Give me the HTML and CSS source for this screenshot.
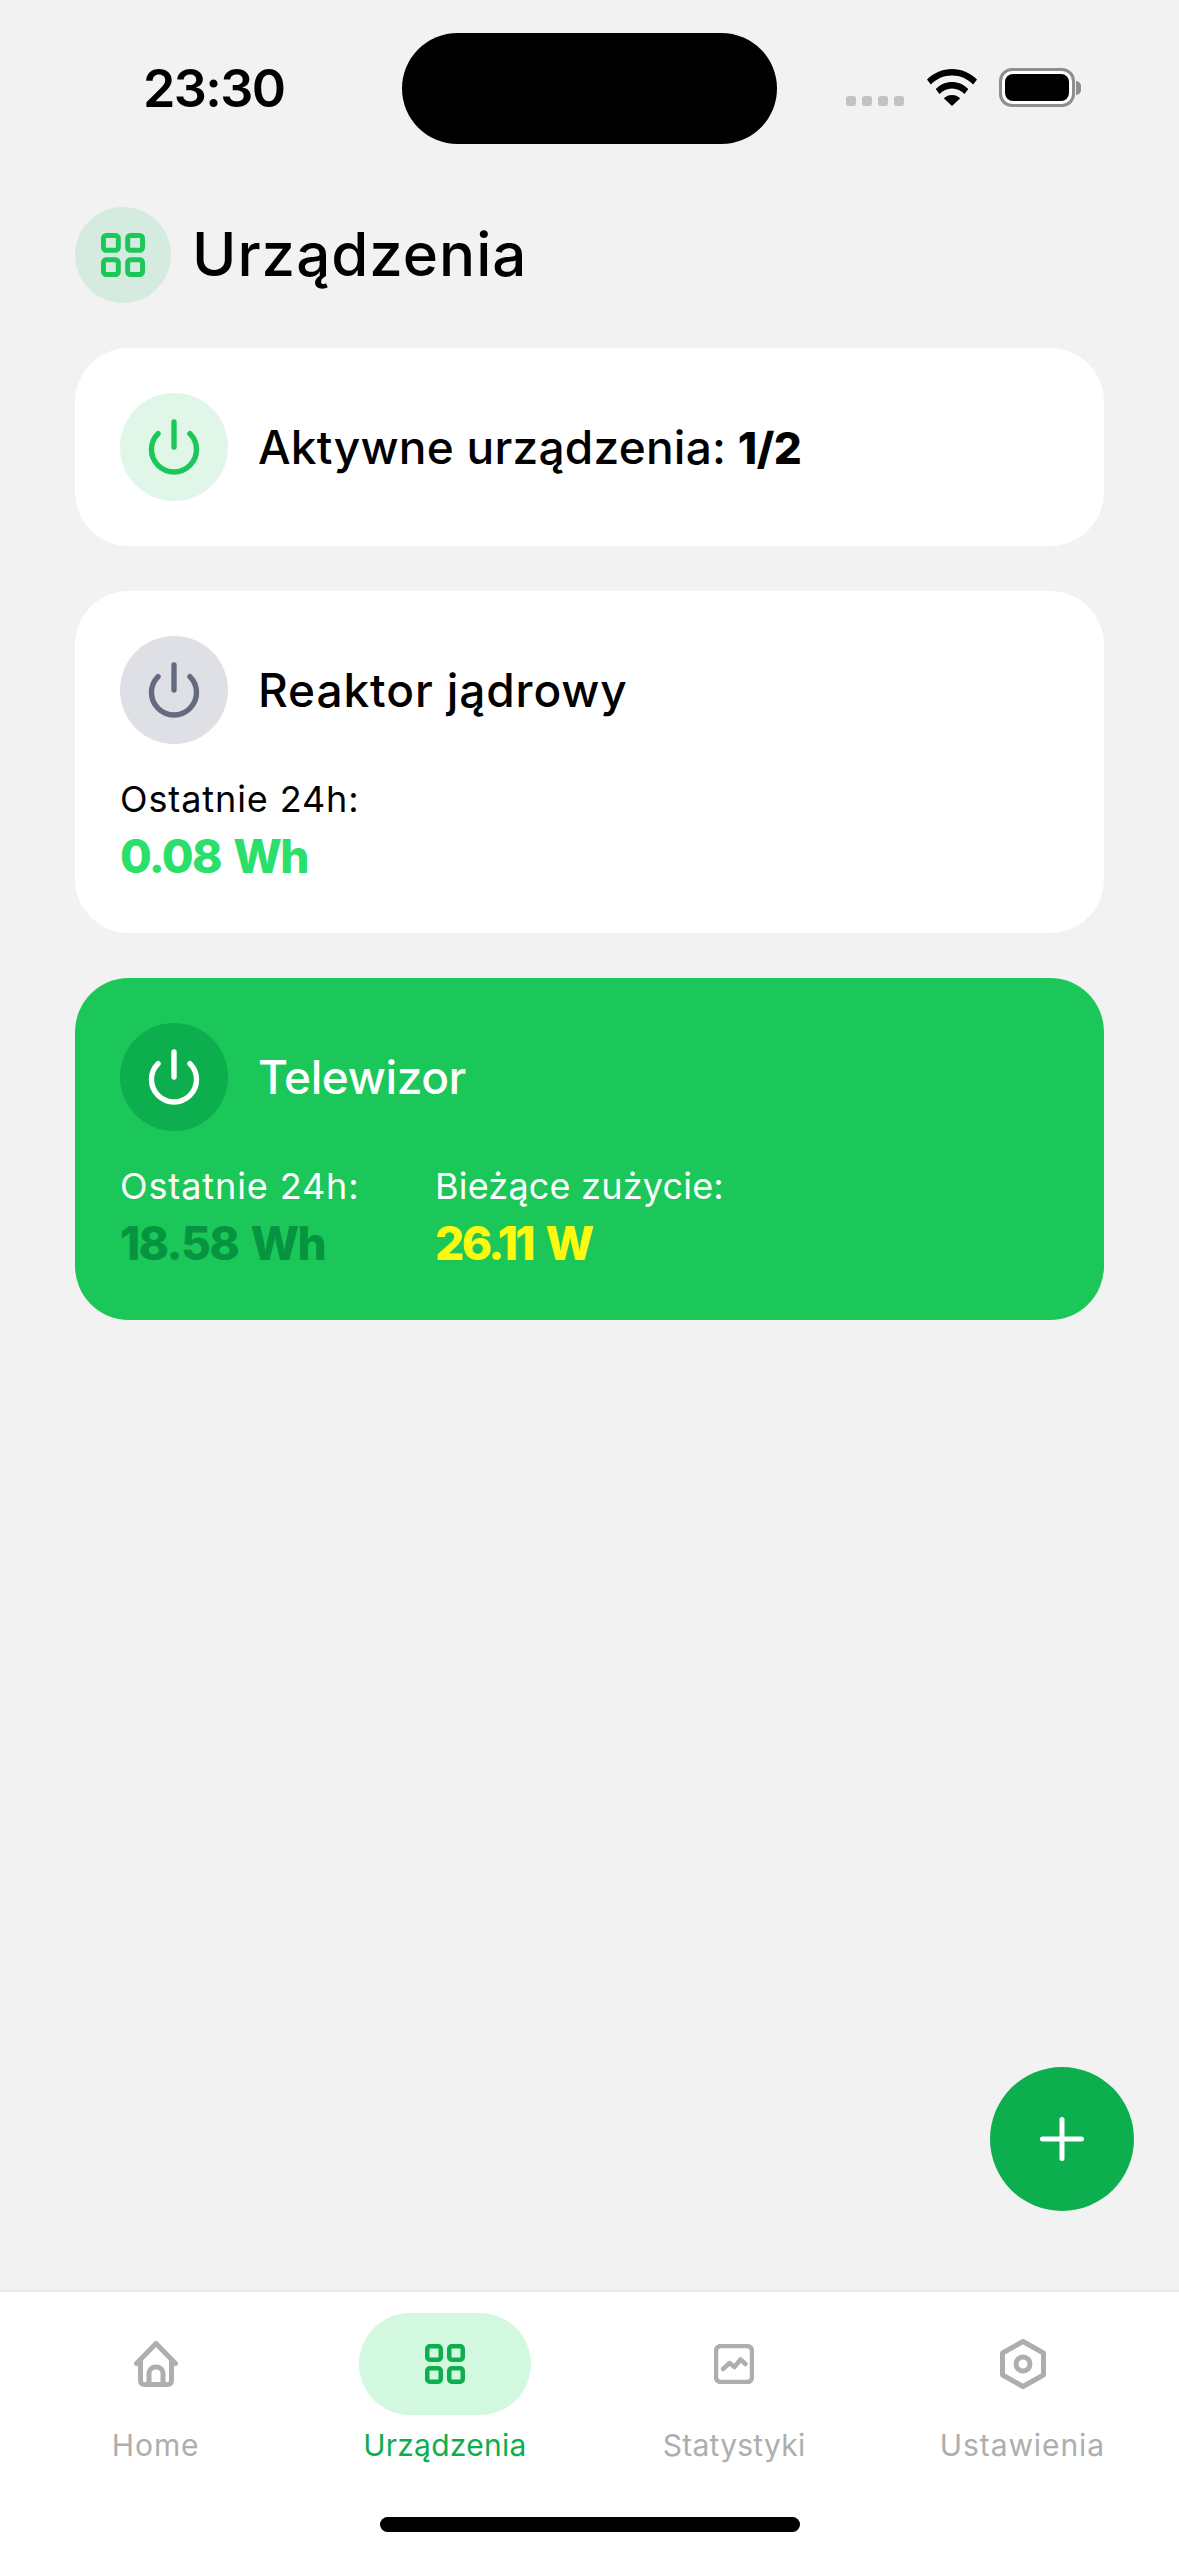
FILE: index.html
```html
<!DOCTYPE html>
<html lang="pl">
<head>
<meta charset="utf-8">
<title>Urządzenia</title>
<link rel="stylesheet" href="styles.css">
</head>
<body>
<div class="app">
  <div class="status">
    <div class="time">23:30</div>
    <div class="island"></div>
    <div class="sys">
      <div class="dots"><i></i><i></i><i></i><i></i></div>
      <svg class="wifi" viewBox="0 0 50 37"><path d="M25 0C15.500 0 7 3.800 0 10.500L3.800 15.500C9.500 9.800 16.800 6.500 25 6.500S40.500 9.800 46.200 15.500L50 10.500C43 3.800 34.500 0 25 0Z"/><path d="M25 13C18.800 13 13.300 15.500 8.700 20L12.500 25C15.800 21.700 20.200 19.500 25 19.500S34.200 21.700 37.500 25L41.300 20C36.700 15.500 31.200 13 25 13Z"/><path d="M25 26C21.800 26 19 27.200 16.800 29.300L25 37L33.200 29.300C31 27.200 28.200 26 25 26Z"/></svg>
      <div class="battery"><div class="battery-body"><div class="battery-fill"></div></div><div class="battery-cap"></div></div>
    </div>
  </div>

  <header class="header">
    <div class="header-icon">
      <svg class="grid-icon" viewBox="0 0 40 40"><rect x="2.250" y="2.250" width="13.500" height="13.500" rx="2.500"/><rect x="24.250" y="2.250" width="13.500" height="13.500" rx="2.500"/><rect x="2.250" y="24.250" width="13.500" height="13.500" rx="2.500"/><rect x="24.250" y="24.250" width="13.500" height="13.500" rx="2.500"/></svg>
    </div>
    <h1 class="title">Urządzenia</h1>
  </header>

  <main class="cards">
    <section class="card">
      <div class="card-head">
        <div class="power power-green"><svg viewBox="0 0 24 24"><path d="M18.360 6.640a9 9 0 1 1-12.730 0"/><path d="M12 2v10"/></svg></div>
        <div class="card-title title-active">Aktywne urządzenia: <b class="count">1/2</b></div>
      </div>
    </section>

    <section class="card">
      <div class="card-head">
        <div class="power power-gray"><svg viewBox="0 0 24 24"><path d="M18.360 6.640a9 9 0 1 1-12.730 0"/><path d="M12 2v10"/></svg></div>
        <div class="card-title title-reactor">Reaktor jądrowy</div>
      </div>
      <div class="stats">
        <div class="stat">
          <div class="stat-label">Ostatnie 24h:</div>
          <div class="stat-value value-green">0.08 Wh</div>
        </div>
      </div>
    </section>

    <section class="card card-on">
      <div class="card-head">
        <div class="power power-white"><svg viewBox="0 0 24 24"><path d="M18.360 6.640a9 9 0 1 1-12.730 0"/><path d="M12 2v10"/></svg></div>
        <div class="card-title title-tv">Telewizor</div>
      </div>
      <div class="stats">
        <div class="stat stat-first">
          <div class="stat-label">Ostatnie 24h:</div>
          <div class="stat-value value-dark">18.58 Wh</div>
        </div>
        <div class="stat">
          <div class="stat-label label-now">Bieżące zużycie:</div>
          <div class="stat-value value-yellow">26.11 W</div>
        </div>
      </div>
    </section>
  </main>

  <button class="fab" aria-label="Dodaj"><svg viewBox="0 0 44 44"><path d="M22 2.500v39M2.500 22h39"/></svg></button>

  <nav class="tabbar">
    <div class="tabs">
      <div class="tab">
        <div class="tab-icon"><svg class="home" viewBox="0 0 44 46"><path d="M2.500 22.500L22 2.500l19.500 20"/><path d="M6.500 19v20.500c0 2.500 1.500 4 4 4h23c2.500 0 4-1.500 4-4V19"/><path d="M15 43V32.500c0-4 3-6.500 7-6.500s7 2.500 7 6.500V43"/></svg></div>
        <div class="tab-label label-wide">Home</div>
      </div>
      <div class="tab tab-active">
        <div class="tab-icon"><svg class="grid-icon" viewBox="0 0 40 40"><rect x="2.250" y="2.250" width="13.500" height="13.500" rx="2.500"/><rect x="24.250" y="2.250" width="13.500" height="13.500" rx="2.500"/><rect x="2.250" y="24.250" width="13.500" height="13.500" rx="2.500"/><rect x="24.250" y="24.250" width="13.500" height="13.500" rx="2.500"/></svg></div>
        <div class="tab-label">Urządzenia</div>
      </div>
      <div class="tab">
        <div class="tab-icon"><svg class="stats-icon" viewBox="0 0 40 40"><rect x="2" y="2" width="36" height="36" rx="5"/><path d="M9 25l6.500-6 5 4 6-7.500 5 4.500"/></svg></div>
        <div class="tab-label">Statystyki</div>
      </div>
      <div class="tab">
        <div class="tab-icon"><svg class="hex" viewBox="0 0 46 50"><path d="M23 2.500L43.500 14v22L23 47.500 2.500 36V14Z"/><circle cx="23" cy="25" r="7"/></svg></div>
        <div class="tab-label label-wide label-settings">Ustawienia</div>
      </div>
    </div>
    <div class="indicator"></div>
  </nav>
</div>
</body>
</html>
```
FILE: styles.css
```css
* { box-sizing: border-box; }
html, body { margin: 0; padding: 0; }
body { background: #f2f2f2; font-family: Inter, "Noto Sans", sans-serif; color: #000; }

.app { position: relative; width: 1179px; height: 2556px; display: flex; flex-direction: column; background: #f2f2f2; overflow: hidden; }

/* Status bar */
.status { display: flex; align-items: flex-start; height: 144px; padding: 33px 0 0 143px; }
.time { width: 259px; height: 111px; padding-top: 25px; font-size: 52px; line-height: 62px; font-weight: 600; letter-spacing: -1.600px; }
.island { width: 375px; height: 111px; border-radius: 56px; background: #000; flex: none; }
.sys { display: flex; align-items: flex-end; margin: 35px 0 0 69px; height: 39px; }
.dots { display: flex; gap: 6px; margin-bottom: 1px; }
.dots i { display: block; width: 10px; height: 10px; border-radius: 3px; background: #c2c2c2; }
.wifi { width: 50px; height: 37px; margin-left: 23px; margin-bottom: 1px; fill: #000; }
.battery { display: flex; align-items: center; margin-left: 22px; }
.battery-body { width: 76px; height: 39px; padding: 3px; border: 3px solid #8e8e8e; border-radius: 13px; background: #fff; }
.battery-fill { width: 100%; height: 100%; background: #000; border-radius: 8px; }
.battery-cap { width: 5px; height: 14px; margin-left: 1px; background: #8e8e8e; border-radius: 0 6px 6px 0; }

/* Header */
.header { display: flex; align-items: center; gap: 21px; height: 96px; margin-top: 63px; padding: 0 75px; }
.header-icon { width: 96px; height: 96px; border-radius: 50%; background: #d5ebdf; display: flex; align-items: center; justify-content: center; flex: none; }
.header-icon .grid-icon { width: 44px; height: 44px; stroke: #1cc759; }
.grid-icon { fill: none; stroke-width: 4.500; }
.title { margin: 0 0 2px; font-size: 60px; line-height: 72px; font-weight: 500; letter-spacing: 1px; }

/* Cards */
.cards { display: flex; flex-direction: column; gap: 45px; margin-top: 45px; padding: 0 75px; }
.card { background: #fff; border-radius: 54px; padding: 45px; }
.card-on { background: #1cc759; color: #fff; }
.card-head { display: flex; align-items: center; gap: 30px; height: 108px; }
.card-title { font-size: 46px; line-height: 60px; font-weight: 500; white-space: pre; }
.title-active { letter-spacing: 0.250px; }
.title-reactor { letter-spacing: 0.900px; }
.title-tv { letter-spacing: -0.400px; }
.count { font-weight: 800; font-size: 44px; letter-spacing: -0.500px; margin-left: -1px; }
.power { width: 108px; height: 108px; border-radius: 50%; display: flex; align-items: center; justify-content: center; flex: none; }
.power svg { width: 60px; height: 60px; fill: none; stroke-width: 2.150; stroke-linecap: round; stroke-linejoin: round; }
.power-green { background: #e0f6e8; }
.power-green svg { stroke: #1cc759; }
.power-gray { background: #dfe0e5; }
.power-gray svg { stroke: #646a80; }
.power-white { background: #0dae4e; }
.power-white svg { stroke: #fff; }

.stats { display: flex; margin-top: 31px; }
.stat-first { width: 315px; }
.stat-label { font-size: 36px; line-height: 48px; font-weight: 400; white-space: nowrap; letter-spacing: 0.900px; }
.label-now { letter-spacing: 0.200px; }
.stat-value { margin-top: 1px; font-size: 46px; line-height: 64px; font-weight: 800; white-space: nowrap; letter-spacing: -1.700px; word-spacing: 4px; }
.value-green { color: #2ae06a; }
.value-dark { color: #069440; }
.value-yellow { color: #fdf90f; letter-spacing: -2.600px; word-spacing: 5px; }

/* FAB */
.fab { position: absolute; left: 990px; top: 2067px; width: 144px; height: 144px; border: 0; padding: 0; border-radius: 50%; background: #0dae4e; display: flex; align-items: center; justify-content: center; }
.fab svg { width: 44px; height: 44px; fill: none; stroke: #fff; stroke-width: 5; stroke-linecap: round; }

/* Tab bar */
.tabbar { margin-top: auto; background: #fff; border-top: 3px solid #ebebeb; height: 267px; }
.tabs { display: grid; grid-template-columns: repeat(4, 1fr); padding: 21px 11px 0; }
.tab { display: flex; flex-direction: column; align-items: center; color: #aeaeae; }
.tab-icon { width: 172px; height: 102px; border-radius: 51px; display: flex; align-items: center; justify-content: center; }
.tab-icon svg { fill: none; stroke: #aeaeae; stroke-linecap: round; stroke-linejoin: round; }
.tab-label { margin-top: 8px; font-size: 30px; line-height: 44px; font-weight: 400; white-space: nowrap; letter-spacing: 0.250px; }
.label-wide { letter-spacing: 0.900px; }
.label-settings { margin-right: 2px; }
.tab-active { color: #0dae4e; }
.tab-active .tab-icon { background: #d3f8e0; }
.tab-active .tab-icon svg { stroke: #0dae4e; width: 40px; height: 40px; stroke-linecap: butt; }
.home { width: 44px; height: 46px; stroke-width: 5; }
.stats-icon { width: 40px; height: 40px; stroke-width: 4.500; }
.hex { width: 46px; height: 50px; stroke-width: 5; }
.indicator { width: 420px; height: 15px; margin: 50px auto 0; border-radius: 8px; background: #000; }
```
